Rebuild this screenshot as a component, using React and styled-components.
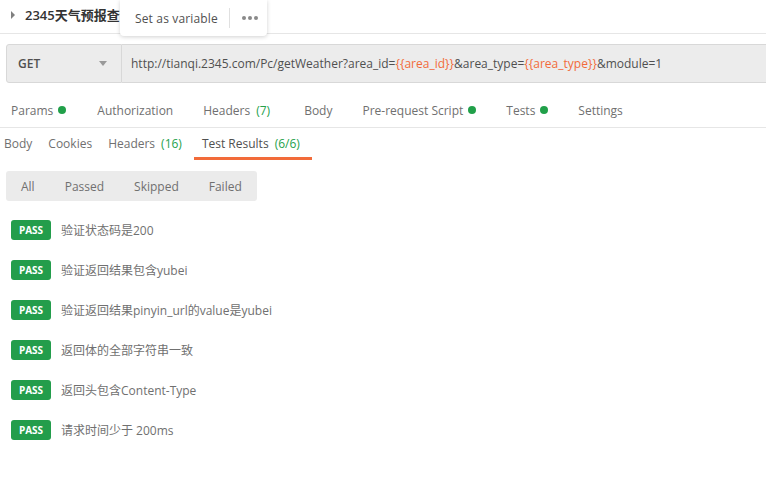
import styled, { createGlobalStyle } from 'styled-components'

const GlobalStyle = createGlobalStyle`
  html, body {
    margin: 0;
    padding: 0;
    background: #fff;
  }
  body {
    font-family: "Open Sans", "Noto Sans CJK SC", sans-serif;
    color: #505050;
  }
`;

const tests = [
  '验证状态码是200',
  '验证返回结果包含yubei',
  '验证返回结果pinyin_url的value是yubei',
  '返回体的全部字符串一致',
  '返回头包含Content-Type',
  '请求时间少于 200ms',
];

const requestTabs = [
  { label: 'Params', dot: true },
  { label: 'Authorization' },
  { label: 'Headers', count: '(7)' },
  { label: 'Body' },
  { label: 'Pre-request Script', dot: true },
  { label: 'Tests', dot: true },
  { label: 'Settings' },
];

const responseTabs = [
  { label: 'Body' },
  { label: 'Cookies' },
  { label: 'Headers', count: '(16)' },
  { label: 'Test Results', count: '(6/6)', active: true },
];

const filters = ['All', 'Passed', 'Skipped', 'Failed'];

const App = () => {
  return (
    <Page>
      <GlobalStyle />
      <TitleBar>
        <Caret />
        <Title>2345天气预报查询</Title>
        <Popup>
          <PopupText>Set as variable</PopupText>
          <PopupDivider />
          <Dots>
            <Dot />
            <Dot />
            <Dot />
          </Dots>
        </Popup>
      </TitleBar>

      <UrlRow>
        <MethodBox>
          <span>GET</span>
          <DownArrow />
        </MethodBox>
        <UrlInput>
          http://tianqi.2345.com/Pc/getWeather?area_id=<Var>{'{{area_id}}'}</Var>&amp;area_type=<Var>{'{{area_type}}'}</Var>&amp;module=1
        </UrlInput>
      </UrlRow>

      <RequestTabs>
        {requestTabs.map((t) => (
          <RequestTab key={t.label}>
            {t.label}
            {t.count && <Count>{t.count}</Count>}
            {t.dot && <GreenDot />}
          </RequestTab>
        ))}
      </RequestTabs>

      <ResponseTabs>
        {responseTabs.map((t) => (
          <ResponseTab key={t.label} active={t.active}>
            {t.label}
            {t.count && <Count>{t.count}</Count>}
          </ResponseTab>
        ))}
      </ResponseTabs>

      <FilterBar>
        {filters.map((f) => (
          <FilterItem key={f}>{f}</FilterItem>
        ))}
      </FilterBar>

      <ResultList>
        {tests.map((t) => (
          <ResultRow key={t}>
            <PassBadge>PASS</PassBadge>
            <ResultText>{t}</ResultText>
          </ResultRow>
        ))}
      </ResultList>
    </Page>
  );
};

export default App;

const Page = styled.div`
  width: 766px;
  height: 496px;
  overflow: hidden;
  position: relative;
`;

const TitleBar = styled.div`
  height: 33px;
  border-bottom: 1px solid #e6e6e6;
  display: flex;
  align-items: center;
  padding-left: 11px;
  position: relative;
`;

const Caret = styled.span`
  width: 0;
  height: 0;
  border-top: 4px solid transparent;
  border-bottom: 4px solid transparent;
  border-left: 4px solid #808080;
  margin-right: 10px;
  margin-top: -4px;
`;

const Title = styled.span`
  font-size: 13px;
  font-weight: 600;
  color: #333;
  margin-top: -5px;
`;

const Popup = styled.div`
  position: absolute;
  left: 120px;
  top: 0;
  width: 147px;
  height: 36px;
  background: #fff;
  border-radius: 0 0 4px 4px;
  box-shadow: 0 1px 4px rgba(0, 0, 0, 0.18);
  display: flex;
  align-items: center;
  padding-left: 15px;
  box-sizing: border-box;
`;

const PopupText = styled.span`
  font-size: 12px;
  letter-spacing: 0.15px;
  color: #505050;
`;

const PopupDivider = styled.span`
  width: 1px;
  height: 20px;
  background: #e0e0e0;
  margin: 0 12px 0 11px;
`;

const Dots = styled.span`
  display: flex;
  gap: 2px;
`;

const Dot = styled.span`
  width: 4px;
  height: 4px;
  border-radius: 50%;
  background: #8a8a8a;
`;

const UrlRow = styled.div`
  display: flex;
  height: 39px;
  margin: 10px 0 10px 6px;
`;

const MethodBox = styled.div`
  width: 116px;
  box-sizing: border-box;
  display: flex;
  align-items: center;
  justify-content: space-between;
  padding: 0 14px 0 11px;
  background: #ececec;
  border: 1px solid #d8d8d8;
  border-radius: 3px 0 0 3px;
  font-size: 12px;
  font-weight: 600;
  color: #505050;
`;

const DownArrow = styled.span`
  width: 0;
  height: 0;
  border-left: 4px solid transparent;
  border-right: 4px solid transparent;
  border-top: 5px solid #999;
`;

const UrlInput = styled.div`
  flex: 1;
  display: flex;
  align-items: center;
  white-space: pre;
  padding-left: 9px;
  background: #ececec;
  border-top: 1px solid #d8d8d8;
  border-bottom: 1px solid #d8d8d8;
  font-size: 12px;
  color: #505050;
`;

const Var = styled.span`
  color: #f26b3a;
`;

const RequestTabs = styled.div`
  display: flex;
  align-items: center;
  gap: 30px;
  height: 34px;
  padding-left: 11px;
  border-bottom: 1px solid #e6e6e6;
`;

const RequestTab = styled.div`
  display: flex;
  align-items: center;
  font-size: 12px;
  color: #707070;
  white-space: nowrap;
  &:nth-child(2) {
    margin-left: 1px;
  }
`;

const Count = styled.span`
  color: #26a14b;
  margin: 0 4px 0 6px;
`;

const GreenDot = styled.span`
  width: 8px;
  height: 8px;
  border-radius: 50%;
  background: #21a04a;
  margin-left: 5px;
`;

const ResponseTabs = styled.div`
  display: flex;
  margin: 1px 0 0 -4px;
`;

const ResponseTab = styled.div`
  height: 31px;
  box-sizing: border-box;
  padding: 1px 8px 0;
  display: flex;
  align-items: center;
  font-size: 12px;
  color: ${({ active }) => (active ? '#505050' : '#707070')};
  border-bottom: 3px solid ${({ active }) => (active ? '#f26b3a' : 'transparent')};
`;

const FilterBar = styled.div`
  display: inline-flex;
  gap: 30px;
  align-items: center;
  height: 30px;
  padding: 0 15px;
  margin: 11px 0 0 6px;
  background: #ebebeb;
  border-radius: 3px;
`;

const FilterItem = styled.span`
  font-size: 12px;
  color: #707070;
`;

const ResultList = styled.div`
  display: flex;
  flex-direction: column;
  margin-top: 9px;
`;

const ResultRow = styled.div`
  height: 40px;
  display: flex;
  align-items: center;
  padding-left: 11px;
`;

const PassBadge = styled.span`
  width: 40px;
  height: 20px;
  border-radius: 3px;
  background: #239d4b;
  color: #fff;
  font-size: 10px;
  font-weight: 700;
  display: flex;
  align-items: center;
  justify-content: center;
  margin-right: 10px;
`;

const ResultText = styled.span`
  font-size: 12px;
  color: #707070;
`;
